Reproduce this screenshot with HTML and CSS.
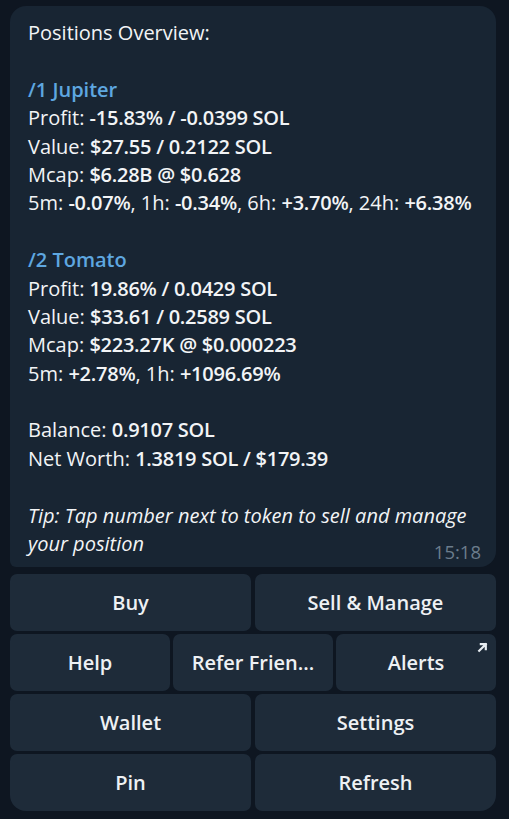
FILE: index.html
```html
<!DOCTYPE html>
<html>
<head>
<meta charset="utf-8">
<link rel="stylesheet" href="styles.css">
</head>
<body>
<div class="chat">
  <div class="bubble">
    <div class="line">Positions Overview:</div>
    <div class="line blank"></div>
    <div class="line"><span class="link">/1 Jupiter</span></div>
    <div class="line">Profit: <b>-15.83% / -0.0399 SOL</b></div>
    <div class="line">Value: <b>$27.55 / 0.2122 SOL</b></div>
    <div class="line">Mcap: <b>$6.28B @ $0.628</b></div>
    <div class="line">5m: <b>-0.07%</b>, 1h: <b>-0.34%</b>, 6h: <b>+3.70%</b>, 24h: <b>+6.38%</b></div>
    <div class="line blank"></div>
    <div class="line"><span class="link">/2 Tomato</span></div>
    <div class="line">Profit: <b>19.86% / 0.0429 SOL</b></div>
    <div class="line">Value: <b>$33.61 / 0.2589 SOL</b></div>
    <div class="line">Mcap: <b>$223.27K @ $0.000223</b></div>
    <div class="line">5m: <b>+2.78%</b>, 1h: <b>+1096.69%</b></div>
    <div class="line blank"></div>
    <div class="line">Balance: <b>0.9107 SOL</b></div>
    <div class="line">Net Worth: <b>1.3819 SOL / $179.39</b></div>
    <div class="line blank"></div>
    <div class="line tip">Tip: Tap number next to token to sell and manage</div>
    <div class="line last-line">
      <span class="tip">your position</span>
      <span class="time">15:18</span>
    </div>
  </div>
  <div class="keyboard">
    <div class="row two">
      <div class="btn">Buy</div>
      <div class="btn">Sell &amp; Manage</div>
    </div>
    <div class="row three">
      <div class="btn">Help</div>
      <div class="btn">Refer Frien...</div>
      <div class="btn">Alerts
        <svg class="ext" width="11" height="11" viewBox="0 0 10 10"><path d="M2 8 L8 2 M3.5 2 H8 V6.5" fill="none" stroke="#e8edf2" stroke-width="2" stroke-linecap="square"/></svg>
      </div>
    </div>
    <div class="row two">
      <div class="btn">Wallet</div>
      <div class="btn">Settings</div>
    </div>
    <div class="row two last">
      <div class="btn">Pin</div>
      <div class="btn">Refresh</div>
    </div>
  </div>
</div>
</body>
</html>
```
FILE: styles.css
```css
html, body {
  margin: 0;
  padding: 0;
  background: #0e1621;
  height: 100%;
}
body {
  font-family: "Open Sans", "Noto Sans", sans-serif;
  color: #f2f4f6;
}
.chat {
  padding: 6px 13px 0 10px;
  display: flex;
  flex-direction: column;
  gap: 7px;
}
.bubble {
  background: #182533;
  border-radius: 16px 16px 16px 6px;
  padding: 13px 15px 9px 18px;
  font-size: 20px;
}
.line {
  line-height: 28.4px;
  height: 28.4px;
  white-space: nowrap;
}
.line b {
  font-weight: 600;
  letter-spacing: -0.25px;
}
.link {
  color: #5ea7e0;
  font-weight: 600;
}
.tip {
  font-style: italic;
}
.last-line {
  display: flex;
  justify-content: space-between;
  align-items: flex-end;
}
.time {
  font-size: 18.5px;
  line-height: 20px;
  margin-bottom: -4px;
  color: #6b7c8c;
}
.keyboard {
  display: flex;
  flex-direction: column;
  gap: 3px;
}
.row {
  display: grid;
  gap: 4px;
}
.row.two {
  grid-template-columns: 1fr 1fr;
}
.row.three {
  grid-template-columns: 1fr 1fr 1fr;
  gap: 3px;
}
.btn {
  position: relative;
  height: 57px;
  background: #1e2b39;
  border-radius: 7px;
  display: flex;
  align-items: center;
  justify-content: center;
  font-size: 20px;
  font-weight: 600;
  color: #eef1f4;
}
.row.last .btn:first-child {
  border-bottom-left-radius: 16px;
}
.row.last .btn:last-child {
  border-bottom-right-radius: 16px;
}
.ext {
  position: absolute;
  top: 8px;
  right: 8px;
}
```
